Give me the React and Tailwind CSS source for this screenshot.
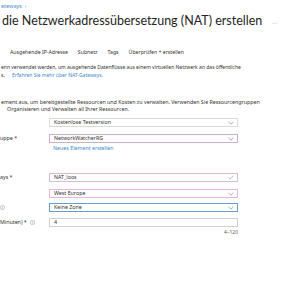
import React from 'react';

function Chevron() {
  return (
    <svg width="6" height="4" viewBox="0 0 6 4" className="shrink-0">
      <path d="M0.5 0.8 L3 3.2 L5.5 0.8" fill="none" stroke="#8a8886" strokeWidth="0.7" />
    </svg>
  );
}

function Check() {
  return (
    <svg width="6" height="5" viewBox="0 0 6 5" className="shrink-0">
      <path d="M0.6 2.6 L2.2 4.1 L5.4 0.8" fill="none" stroke="#8fae8f" strokeWidth="0.7" />
    </svg>
  );
}

function Info() {
  return (
    <svg width="5" height="5" viewBox="0 0 10 10" className="inline-block shrink-0">
      <circle cx="5" cy="5" r="4.3" fill="none" stroke="#8a8886" strokeWidth="0.9" />
      <path d="M5 4.3 V7.4 M5 2.4 V3.2" stroke="#8a8886" strokeWidth="0.9" />
    </svg>
  );
}

function Field({ label, value, border, icon, className = '' }) {
  return (
    <div className={`flex items-center ${className}`}>
      <div className="w-[49px] text-[5.3px] leading-[9px] flex items-center gap-[3px]">{label}</div>
      <div className={`w-[189px] h-[9px] border ${border} flex items-center justify-between pl-[4px] pr-[3px] text-[5.3px]`}>
        <span>{value}</span>
        {icon}
      </div>
    </div>
  );
}

export default function App() {
  return (
    <div className="w-[300px] h-[300px] bg-white overflow-hidden text-[#323130] font-['Noto_Sans',sans-serif]">
      <div className="pt-[3px] pl-[1px] text-[5.5px] leading-[6px] text-[#4a8cd0]">eteways &nbsp;›</div>

      <div className="mt-[4px] flex items-center pl-[2px]">
        <h1 className="text-[12.5px] leading-[16px] text-[#252423] font-['Lato',sans-serif]">die Netzwerkadressübersetzung (NAT) erstellen</h1>
        <span className="ml-[9px] text-[8px] text-[#d2d0ce]">…</span>
      </div>

      <div className="mt-[19px] flex gap-[10px] pl-[10px] text-[5.2px] leading-[8px]">
        <span>Ausgehende IP-Adresse</span>
        <span>Subnetz</span>
        <span>Tags</span>
        <span>Überprüfen + erstellen</span>
      </div>

      <div className="mt-[7px] pl-[1px] text-[5px] leading-[8px]">
        <div>enn verwendet werden, um ausgehende Datenflüsse aus einem virtuellen Netzwerk an das öffentliche</div>
        <div>
          s. <span className="ml-[6px] text-[#3f88d0]">Erfahren Sie mehr über NAT-Gateways.</span>
        </div>
      </div>

      <div className="mt-[20px] pl-[1px] text-[5.3px] leading-[7px]">
        <div>ement aus, um bereitgestellte Ressourcen und Kosten zu verwalten. Verwenden Sie Ressourcengruppen</div>
        <div className="pl-[6px]">Organisieren und Verwalten all Ihrer Ressourcen.</div>
      </div>

      <Field className="mt-[5px]" label="" value="Kostenlose Testversion" border="border-[#dcdad8]" icon={<Chevron />} />
      <Field className="mt-[7px]" label="uppe *" value="NetworkWatcherRG" border="border-[#cbb0d2]" icon={<Chevron />} />
      <div className="mt-[2px] pl-[53px] text-[5.3px] leading-[6px] text-[#3f88d0]">Neues Element erstellen</div>

      <Field className="mt-[22px]" label="ays *" value="NAT_loos" border="border-[#d3bcd8]" icon={<Check />} />
      <Field className="mt-[7px]" label="" value="West Europe" border="border-[#e8b4de]" icon={<Chevron />} />
      <Field className="mt-[5px]" label={<Info />} value="Keine Zone" border="border-[#6b9bd0]" icon={<Chevron />} />
      <Field
        className="mt-[6px]"
        label={<><span>Minuten) *</span><Info /></>}
        value="4"
        border="border-[#d2d0ce]"
      />
      <div className="mt-[2px] w-[238px] text-right text-[5px] leading-[6px] text-[#605e5c]">4–120</div>
    </div>
  );
}
